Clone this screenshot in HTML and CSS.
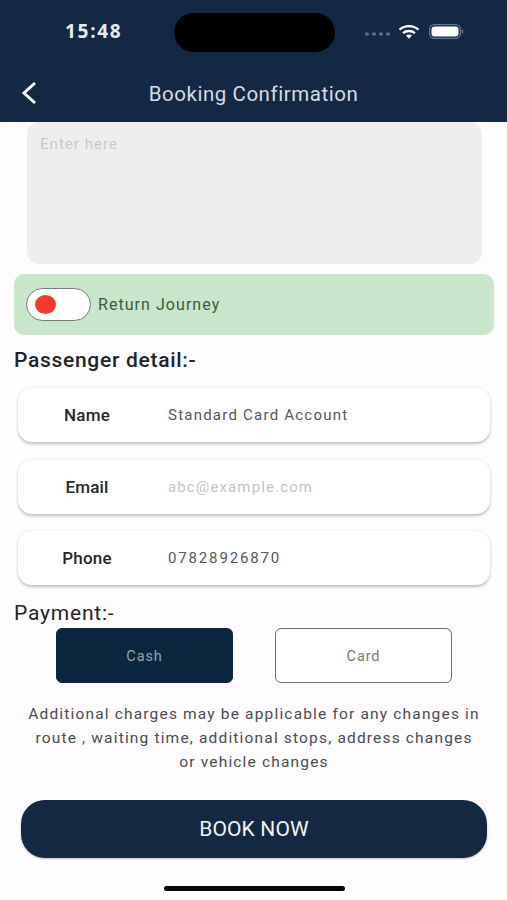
FILE: index.html
```html
<!DOCTYPE html>
<html lang="en">
<head>
<meta charset="utf-8">
<title>Booking Confirmation</title>
<link rel="stylesheet" href="styles.css">
</head>
<body>
<div class="screen">
  <header class="header">
    <div class="status">
      <span class="time">15:48</span>
      <div class="island"></div>
      <div class="status-icons">
        <svg class="signal" width="26" height="4" viewBox="0 0 26 4"><g fill="#5d7087"><rect x="0" y="0.5" width="4" height="3" rx="1"/><rect x="7" y="0.5" width="4" height="3" rx="1"/><rect x="14" y="0.5" width="4" height="3" rx="1"/><rect x="21" y="0.5" width="4" height="3" rx="1"/></g></svg>
        <svg class="wifi" width="22" height="15" viewBox="0 0 22 15"><g fill="none" stroke="#fff" stroke-width="2.4"><path d="M1.5 5.6C6.8 .9 15.2 .9 20.5 5.6"/><path d="M5 9.1c3.4-2.9 8.6-2.9 12 0"/></g><path d="M8 11.6c1.8-1.4 4.2-1.4 6 0l-3 3.2z" fill="#fff"/></svg>
        <svg class="battery" width="35" height="15" viewBox="0 0 35 15"><rect x="0.7" y="0.7" width="30.6" height="13.6" rx="4.5" fill="none" stroke="#65758a" stroke-width="1.3"/><rect x="2.5" y="2.5" width="27" height="10" rx="3" fill="#fff"/><rect x="32.6" y="5.5" width="1.6" height="4" rx="0.8" fill="#65758a"/></svg>
      </div>
    </div>
    <div class="nav">
      <svg class="back" width="16" height="24" viewBox="0 0 16 24"><path d="M14 2 3 12l11 10" fill="none" stroke="#fff" stroke-width="3"/></svg>
      <h1 class="nav-title">Booking Confirmation</h1>
    </div>
  </header>

  <main class="content">
    <div class="notes">Enter here</div>

    <div class="return-row">
      <div class="toggle"><span class="toggle-dot"></span></div>
      <span class="return-label">Return Journey</span>
    </div>

    <h2 class="section-title passenger-title">Passenger detail:-</h2>

    <div class="cards">
      <div class="card">
        <span class="card-label">Name</span>
        <span class="card-value">Standard Card Account</span>
      </div>
      <div class="card">
        <span class="card-label">Email</span>
        <span class="card-value placeholder">abc@example.com</span>
      </div>
      <div class="card">
        <span class="card-label">Phone</span>
        <span class="card-value digits">07828926870</span>
      </div>
    </div>

    <h2 class="section-title payment-title">Payment:-</h2>

    <div class="payment">
      <div class="pay-btn pay-active">Cash</div>
      <div class="pay-btn">Card</div>
    </div>

    <p class="note">Additional charges may be applicable for any changes in route , waiting time, additional stops, address changes or vehicle changes</p>

    <div class="book">BOOK NOW</div>
    <div class="home-indicator"></div>
  </main>
</div>
</body>
</html>
```
FILE: styles.css
```css
* { box-sizing: border-box; }
html, body { margin: 0; padding: 0; }
body {
  width: 507px;
  height: 900px;
  overflow: hidden;
  background: #fefcfe;
  font-family: Roboto, "Liberation Sans", sans-serif;
}
.screen { display: flex; flex-direction: column; height: 900px; }

.header {
  height: 122px;
  background: #132845;
  display: flex;
  flex-direction: column;
  flex: none;
}
.status {
  height: 64px;
  padding: 13px 0 0 65px;
  display: flex;
  align-items: flex-start;
}
.time {
  width: 109px;
  margin-top: 6px;
  font: 700 19px/24px "Open Sans", sans-serif;
  letter-spacing: 1.7px;
  color: #e9ecef;
}
.island {
  width: 161px;
  height: 39px;
  border-radius: 20px;
  background: #000;
}
.status-icons {
  margin-left: 30px;
  display: flex;
  align-items: center;
  gap: 8px;
  height: 38px;
}
.signal { margin-top: 4px; }
.wifi { margin-top: -2px; margin-left: -1px; }
.battery { margin-top: -1px; margin-left: 1px; }

.nav {
  flex: 1;
  display: flex;
  align-items: center;
  justify-content: center;
  position: relative;
  padding-top: 2px;
}
.back { position: absolute; left: 21px; top: 17px; }
.nav-title {
  margin: 0;
  font: 400 20.5px/28px Roboto, sans-serif;
  letter-spacing: 0.55px;
  color: #d7dce3;
}

.content {
  flex: 1;
  padding: 0 13px 0 14px;
  display: flex;
  flex-direction: column;
}
.notes {
  margin: 0 12px 0 13px;
  height: 142px;
  background: #eeeeee;
  border-radius: 12px;
  padding: 12px 13px;
  font-size: 15px;
  line-height: 20px;
  letter-spacing: 1.05px;
  color: #c8c8c8;
}
.return-row {
  margin-top: 10px;
  height: 61px;
  background: #c8e6c9;
  border-radius: 10px;
  padding: 0 12px;
  display: flex;
  align-items: center;
  gap: 7px;
}
.toggle {
  width: 65px;
  height: 33px;
  border-radius: 17px;
  border: 1px solid #77797c;
  background: #fff;
  display: flex;
  align-items: center;
  padding-left: 8px;
}
.toggle-dot {
  width: 21px;
  height: 19px;
  border-radius: 50%;
  background: #f33a2e;
}
.return-label {
  font-size: 16px;
  letter-spacing: 1.05px;
  color: #3c5a40;
}
.section-title {
  margin: 0;
  font: 500 21px/28px Roboto, sans-serif;
  letter-spacing: 0.7px;
  color: #1f2429;
}
.passenger-title { margin-top: 11px; }
.payment-title { margin-top: 14px; font-weight: 400; letter-spacing: 0.8px; }
.cards {
  margin: 14px 4px 0;
  display: flex;
  flex-direction: column;
  gap: 17.5px;
}
.card {
  height: 54px;
  background: #fff;
  border-radius: 14px;
  box-shadow: 0 1.5px 3px rgba(0, 0, 0, 0.25);
  display: flex;
  align-items: center;
}
.card-label {
  width: 150px;
  padding-right: 12px;
  text-align: center;
  font-size: 17px;
  font-weight: 500;
  letter-spacing: 0.2px;
  color: #24282c;
}
.card-value {
  font-size: 15px;
  letter-spacing: 1.23px;
  color: #55585b;
}
.card-value.placeholder { color: #c4c4c4; letter-spacing: 1.13px; }
.card-value.digits { letter-spacing: 1.85px; }
.payment {
  margin: 1px 0 0 42px;
  display: flex;
  gap: 42px;
}
.pay-btn {
  width: 177px;
  height: 55px;
  padding-top: 1px;
  border-radius: 6px;
  border: 1.5px solid #6d7073;
  background: #fff;
  display: flex;
  align-items: center;
  justify-content: center;
  font-size: 14.5px;
  letter-spacing: 0.9px;
  color: #75787c;
}
.pay-active {
  background: #0b2740;
  border-color: #0b2740;
  color: #97a4b2;
}
.note {
  margin: 19px 0 0;
  padding: 0 13px;
  text-align: center;
  font-size: 15.5px;
  line-height: 24px;
  letter-spacing: 1.17px;
  color: #4a4d50;
}
.book {
  margin: 26px 7px 0;
  height: 58px;
  border-radius: 24px;
  background: #122843;
  box-shadow: 0 1px 2px rgba(0, 0, 0, 0.25);
  display: flex;
  align-items: center;
  justify-content: center;
  font-size: 21px;
  font-weight: 400;
  letter-spacing: 0.15px;
  color: #f2f4f6;
}
.home-indicator {
  margin: 28px 0 0 150px;
  width: 181px;
  height: 5px;
  border-radius: 3px;
  background: #050505;
}
```
